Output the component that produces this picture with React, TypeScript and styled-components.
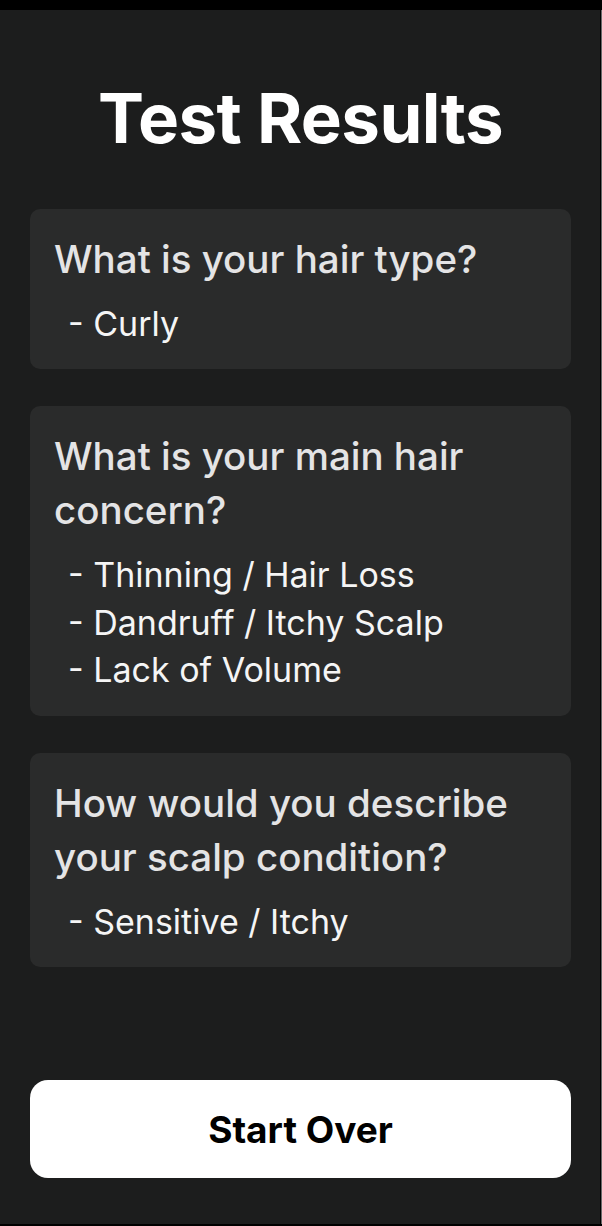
import React from "react";
import styled, { createGlobalStyle } from "styled-components";

const Global = createGlobalStyle`
  html, body { margin: 0; padding: 0; background: #000; }
  body { font-family: Inter, "Noto Sans", sans-serif; }
`;

const Frame = styled.div`
  width: 602px;
  height: 1226px;
  box-sizing: border-box;
  background: #000;
  padding: 10px 0 2px 0;
  display: flex;
`;

const Screen = styled.main`
  flex: 1;
  background: #1c1d1d;
  border-right: 1px solid #000;
  box-shadow: 1px 0 0 #6a6a6a;
  margin-right: 1px;
  display: flex;
  flex-direction: column;
  padding: 0 29px 46px 30px;
`;

const Title = styled.h1`
  margin: 65px 0 0;
  text-align: center;
  color: #ffffff;
  font-size: 69px;
  font-weight: 700;
  line-height: 86px;
  letter-spacing: -0.6px;
`;

const List = styled.section`
  margin-top: 48px;
  display: flex;
  flex-direction: column;
  gap: 37px;
`;

const Card = styled.div`
  background: #2a2b2b;
  border-radius: 10px;
  padding: 24px 24px 22px;
`;

const Question = styled.h2`
  margin: 0;
  color: #e4e4e5;
  font-size: 38.5px;
  font-weight: 500;
  line-height: 1.4;
`;

const Answers = styled.ul`
  list-style: none;
  margin: 13px 0 0;
  padding: 0 0 0 14px;
`;

const Answer = styled.li`
  color: #f5f5f5;
  font-size: 34px;
  line-height: 1.4;
`;

const StartButton = styled.button`
  margin-top: auto;
  height: 98px;
  width: 100%;
  border: none;
  border-radius: 18px;
  background: #ffffff;
  color: #000;
  font-family: Inter, "Noto Sans", sans-serif;
  font-size: 37px;
  font-weight: 700;
`;

const results = [
  { q: "What is your hair type?", a: ["Curly"] },
  {
    q: "What is your main hair concern?",
    a: ["Thinning / Hair Loss", "Dandruff / Itchy Scalp", "Lack of Volume"],
  },
  { q: "How would you describe your scalp condition?", a: ["Sensitive / Itchy"] },
];

export default function App() {
  return (
    <>
      <Global />
      <Frame>
        <Screen>
          <Title>Test Results</Title>
          <List>
            {results.map((r) => (
              <Card key={r.q}>
                <Question>{r.q}</Question>
                <Answers>
                  {r.a.map((a) => (
                    <Answer key={a}>- {a}</Answer>
                  ))}
                </Answers>
              </Card>
            ))}
          </List>
          <StartButton>Start Over</StartButton>
        </Screen>
      </Frame>
    </>
  );
}
